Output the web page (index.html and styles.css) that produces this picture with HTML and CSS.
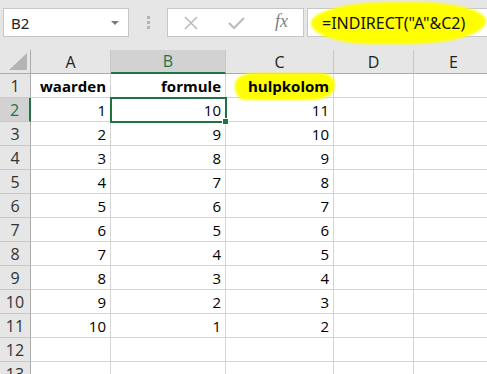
FILE: index.html
```html
<!DOCTYPE html>
<html>
<head>
    <meta charset="UTF-8">
    <link rel="stylesheet" href="styles.css">
</head>
<body>
    <div class="toolbar">
        <div class="namebox">
            <span>B2</span>
            <svg class="dropdown" width="8" height="5" viewBox="0 0 8 5"><path d="M0 0H8L4 4Z" fill="#7a7a7a"/></svg>
        </div>
        <div class="grip"><i></i><i></i><i></i></div>
        <div class="buttons">
            <svg width="14" height="14" viewBox="0 0 14 14"><path d="M1 1L13 13M13 1L1 13" stroke="#bcbcbc" stroke-width="1.6" fill="none"/></svg>
            <svg width="17" height="12" viewBox="0 0 17 12"><path d="M1 6L6 11L16 1" stroke="#bcbcbc" stroke-width="2.2" fill="none"/></svg>
            <span class="fx">fx</span>
        </div>
        <div class="formula">
            <span class="mark">=INDIRECT("A"&amp;C2)</span>
        </div>
    </div>

    <div class="sheet">
        <div class="corner"><svg width="18" height="17" viewBox="0 0 18 17"><path d="M18 0V17H0Z" fill="#b4b4b4"/></svg></div>
        <div class="colhead">A</div>
        <div class="colhead sel">B</div>
        <div class="colhead">C</div>
        <div class="colhead">D</div>
        <div class="colhead">E</div>

        <div class="rowhead">1</div>
        <div class="cell bold">waarden</div>
        <div class="cell bold">formule</div>
        <div class="cell bold"><span class="mark">hulpkolom</span></div>
        <div class="cell"></div>
        <div class="cell"></div>

        <div class="rowhead sel">2</div>
        <div class="cell">1</div>
        <div class="cell active">10<i class="handle"></i></div>
        <div class="cell">11</div>
        <div class="cell"></div>
        <div class="cell"></div>

        <div class="rowhead">3</div>
        <div class="cell">2</div>
        <div class="cell">9</div>
        <div class="cell">10</div>
        <div class="cell"></div>
        <div class="cell"></div>

        <div class="rowhead">4</div>
        <div class="cell">3</div>
        <div class="cell">8</div>
        <div class="cell">9</div>
        <div class="cell"></div>
        <div class="cell"></div>

        <div class="rowhead">5</div>
        <div class="cell">4</div>
        <div class="cell">7</div>
        <div class="cell">8</div>
        <div class="cell"></div>
        <div class="cell"></div>

        <div class="rowhead">6</div>
        <div class="cell">5</div>
        <div class="cell">6</div>
        <div class="cell">7</div>
        <div class="cell"></div>
        <div class="cell"></div>

        <div class="rowhead">7</div>
        <div class="cell">6</div>
        <div class="cell">5</div>
        <div class="cell">6</div>
        <div class="cell"></div>
        <div class="cell"></div>

        <div class="rowhead">8</div>
        <div class="cell">7</div>
        <div class="cell">4</div>
        <div class="cell">5</div>
        <div class="cell"></div>
        <div class="cell"></div>

        <div class="rowhead">9</div>
        <div class="cell">8</div>
        <div class="cell">3</div>
        <div class="cell">4</div>
        <div class="cell"></div>
        <div class="cell"></div>

        <div class="rowhead">10</div>
        <div class="cell">9</div>
        <div class="cell">2</div>
        <div class="cell">3</div>
        <div class="cell"></div>
        <div class="cell"></div>

        <div class="rowhead">11</div>
        <div class="cell">10</div>
        <div class="cell">1</div>
        <div class="cell">2</div>
        <div class="cell"></div>
        <div class="cell"></div>

        <div class="rowhead">12</div>
        <div class="cell"></div>
        <div class="cell"></div>
        <div class="cell"></div>
        <div class="cell"></div>
        <div class="cell"></div>

        <div class="rowhead">13</div>
        <div class="cell"></div>
        <div class="cell"></div>
        <div class="cell"></div>
        <div class="cell"></div>
        <div class="cell"></div>
    </div>
</body>
</html>
```

FILE: styles.css
```css
body {
    margin: 0;
    background-color: #e6e6e6;
    font-family: "Open Sans", "Noto Sans", sans-serif;
    overflow: hidden;
}

.toolbar {
    height: 50px;
    box-sizing: border-box;
    padding: 8px 0 0 3px;
    display: flex;
    align-items: flex-start;
    font-family: "Noto Sans", sans-serif;
}

.namebox {
    width: 126px;
    height: 29px;
    box-sizing: border-box;
    border: 1px solid #c6c6c6;
    background-color: #ffffff;
    display: flex;
    align-items: center;
    justify-content: space-between;
    padding: 0 9px 0 7px;
    font-size: 15px;
    color: #222222;
}

    .namebox .dropdown {
        margin-top: 1px;
    }

.grip {
    width: 38px;
    height: 29px;
    display: flex;
    flex-direction: column;
    align-items: center;
    justify-content: center;
    gap: 2px;
}

    .grip i {
        width: 3px;
        height: 3px;
        background-color: #b4b4b4;
    }

.buttons {
    width: 137px;
    height: 29px;
    box-sizing: border-box;
    border: 1px solid #c6c6c6;
    background-color: #ffffff;
    display: flex;
    align-items: center;
    padding-left: 16px;
    gap: 30px;
}

    .buttons .fx {
        font-family: "Liberation Serif", serif;
        font-style: italic;
        font-size: 18px;
        color: #808080;
        margin-top: -2px;
    }

.formula {
    flex: 1;
    margin-left: 3px;
    height: 29px;
    box-sizing: border-box;
    border: 1px solid #c6c6c6;
    border-right: none;
    background-color: #ffffff;
    display: flex;
    align-items: center;
    padding-left: 14px;
    font-size: 16px;
    color: #111111;
}

/* markeerstift */
.mark {
    position: relative;
    z-index: 0;
}

    .mark::before {
        content: "";
        position: absolute;
        z-index: -1;
        background-color: #ffff00;
        filter: blur(1px);
    }

.formula .mark::before {
    left: -11px;
    right: -21px;
    top: -10px;
    bottom: -10px;
    border-radius: 45% 40% 45% 35% / 50% 45% 55% 50%;
}

.cell .mark::before {
    left: -13px;
    right: -6px;
    top: -3px;
    bottom: -4px;
    border-radius: 20% 15% 25% 10% / 40% 40% 50% 50%;
}

.sheet {
    display: grid;
    grid-template-columns: 31px 80px 115px 108px 80px 80px;
    grid-auto-rows: 24px;
    font-size: 15px;
}

.corner,
.colhead,
.rowhead,
.cell {
    box-sizing: border-box;
    border-right: 1px solid #d4d4d4;
    border-bottom: 1px solid #d4d4d4;
}

.corner {
    display: flex;
    align-items: flex-end;
    justify-content: flex-end;
    padding: 0 3px 3px 0;
    border-right-color: #ababab;
    border-bottom-color: #ababab;
}

.colhead {
    display: flex;
    align-items: center;
    justify-content: center;
    font-size: 16px;
    color: #222222;
    border-right-color: #c8c8c8;
    border-bottom-color: #ababab;
}

    .colhead.sel {
        background-color: #d2d2d2;
        color: #217346;
        border-bottom: 2px solid #217346;
    }

.rowhead {
    display: flex;
    align-items: center;
    justify-content: center;
    font-size: 16px;
    color: #333333;
    border-right-color: #ababab;
    border-bottom-color: #c8c8c8;
}

    .rowhead.sel {
        background-color: #d2d2d2;
        color: #217346;
        border-right: 2px solid #217346;
    }

.cell {
    background-color: #ffffff;
    display: flex;
    align-items: center;
    justify-content: flex-end;
    padding-right: 4px;
    color: #000000;
}

    .cell.bold {
        font-weight: bold;
    }

    .cell.active {
        position: relative;
        outline: 2px solid #217346;
        outline-offset: -1px;
        z-index: 1;
    }

.handle {
    position: absolute;
    right: -4px;
    bottom: -4px;
    width: 5px;
    height: 5px;
    background-color: #217346;
    border: 1px solid #ffffff;
}
```
